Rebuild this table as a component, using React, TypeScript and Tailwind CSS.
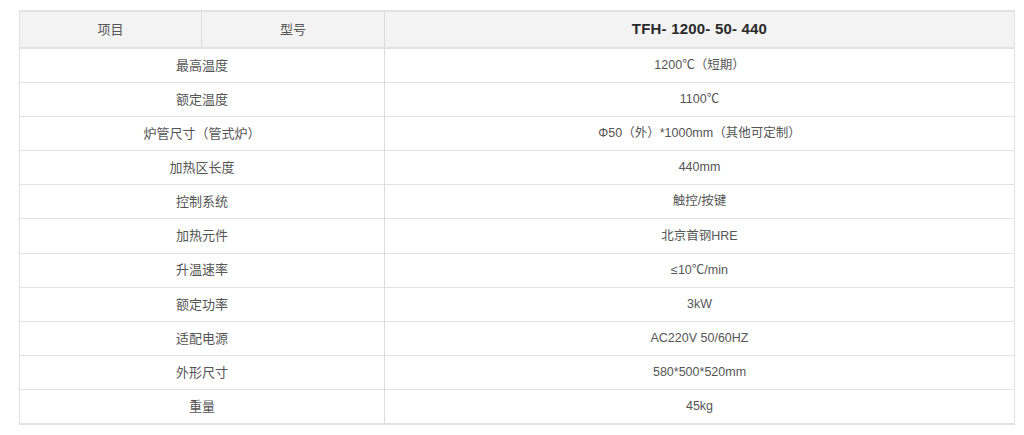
import React from 'react';

const ROWS: [string, string][] = [
  ['最高温度', '1200℃（短期）'],
  ['额定温度', '1100℃'],
  ['炉管尺寸（管式炉）', 'Φ50（外）*1000mm（其他可定制）'],
  ['加热区长度', '440mm'],
  ['控制系统', '触控/按键'],
  ['加热元件', '北京首钢HRE'],
  ['升温速率', '≤10℃/min'],
  ['额定功率', '3kW'],
  ['适配电源', 'AC220V 50/60HZ'],
  ['外形尺寸', '580*500*520mm'],
  ['重量', '45kg'],
];

export default function App() {
  return (
    <div
      className="w-[1024px] h-[435px] bg-white pt-[10px] pl-[19px]"
      style={{ fontFamily: '"Liberation Sans", "Noto Sans CJK SC", sans-serif' }}
    >
      <table className="w-[996px] border-collapse border-t-2 border-b-2 border-x border-[#e2e2e2] text-[#555]">
        <colgroup>
          <col className="w-[182px]" />
          <col className="w-[183px]" />
          <col />
        </colgroup>
        <thead>
          <tr className="h-[37px] bg-[#f3f3f3] border-b-2 border-[#e2e2e2]">
            <th className="font-normal text-[13px] border-r border-[#dcdcdc]">项目</th>
            <th className="font-normal text-[13px] border-r border-[#dcdcdc]">型号</th>
            <th className="font-bold text-[15px] text-[#2a2a2a] tracking-[0.2px]">TFH- 1200- 50- 440</th>
          </tr>
        </thead>
        <tbody>
          {ROWS.map(([label, value]) => (
            <tr key={label} className="h-[34.2px] border-b border-[#e2e2e2]">
              <td colSpan={2} className="text-center text-[13px] border-r border-[#dcdcdc]">
                {label}
              </td>
              <td className="text-center text-[12.5px]">{value}</td>
            </tr>
          ))}
        </tbody>
      </table>
    </div>
  );
}
